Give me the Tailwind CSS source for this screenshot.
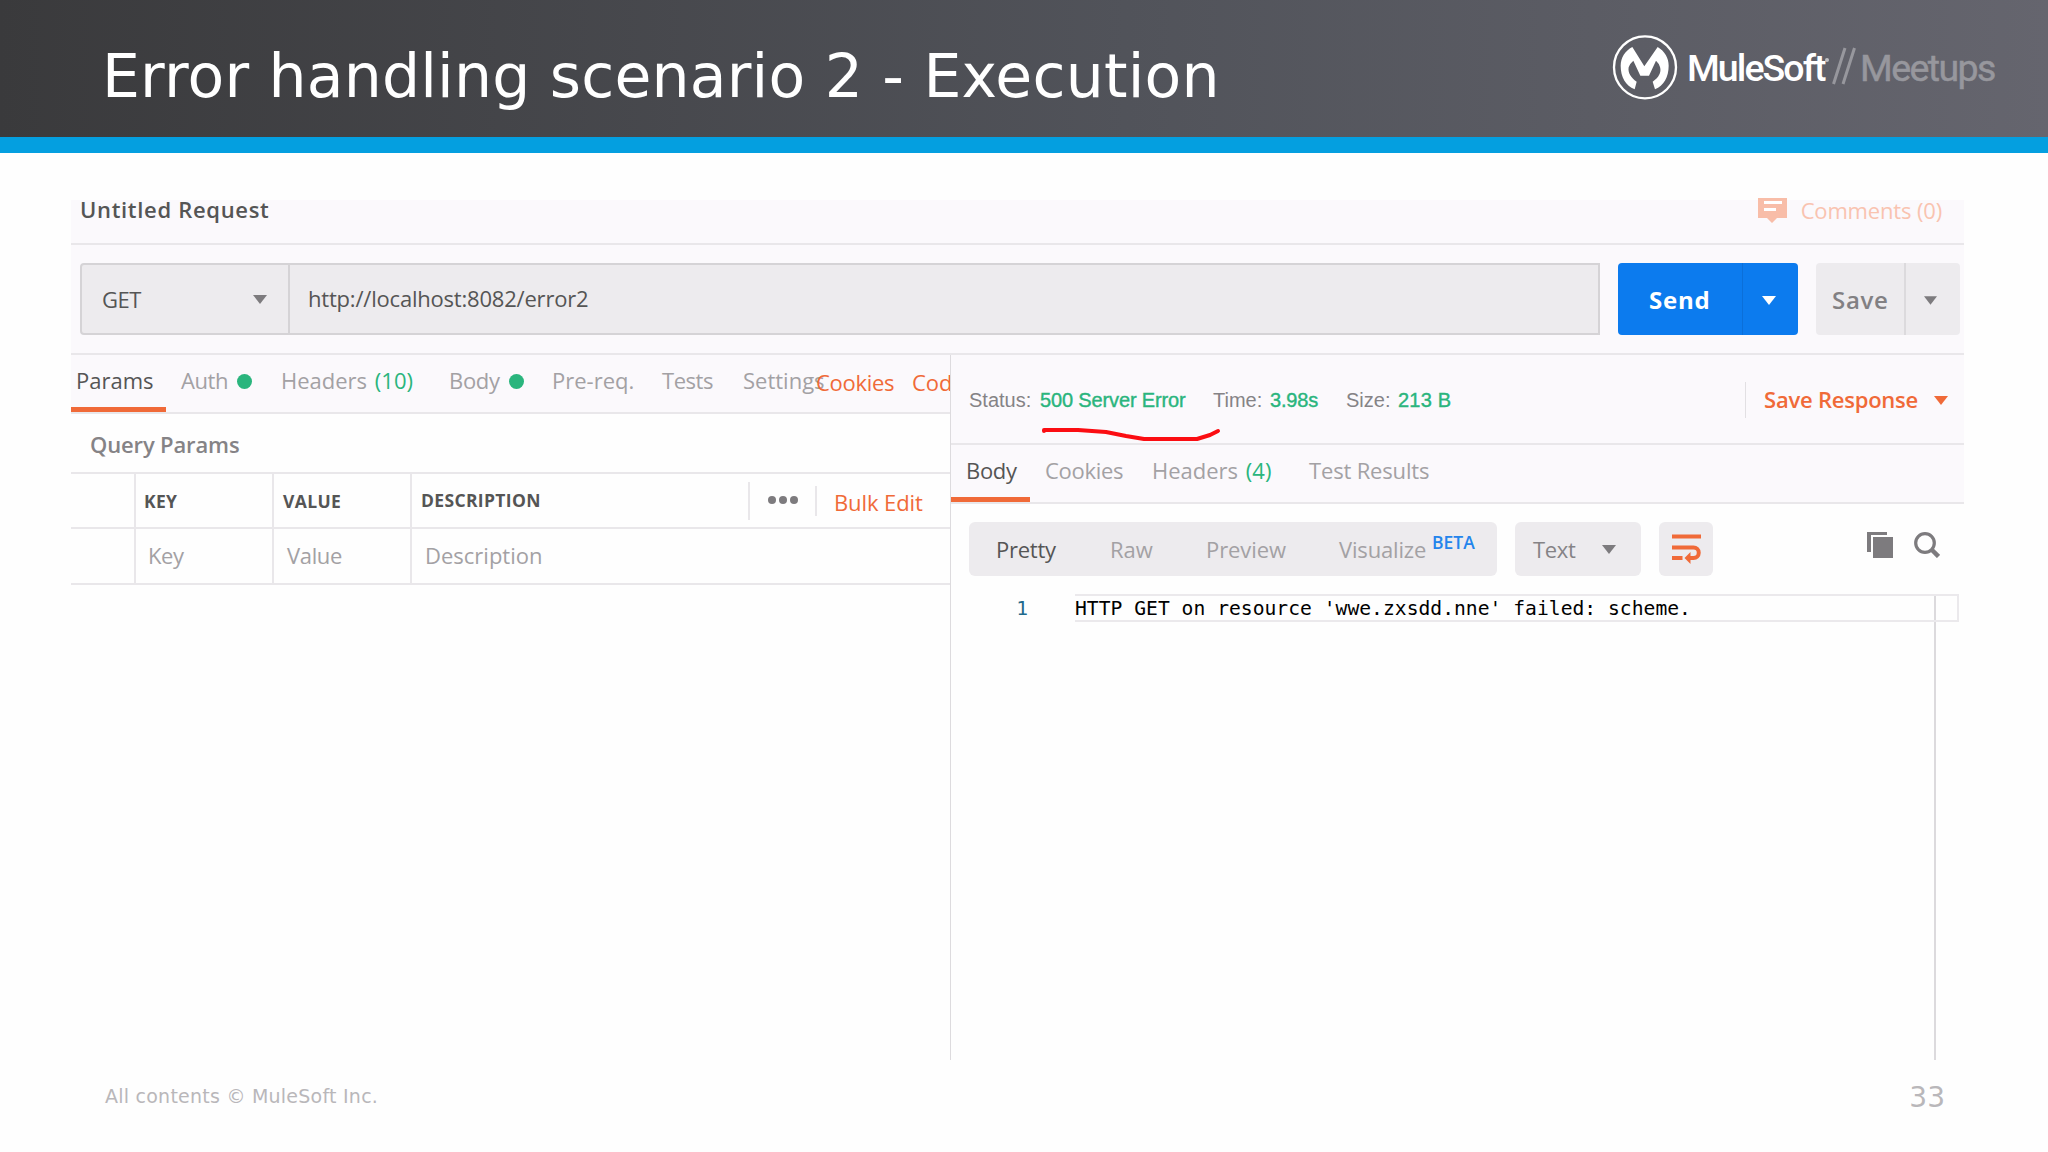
<!DOCTYPE html>
<html lang="en">
<head>
    <meta charset="UTF-8">
    <meta name="viewport" content="width=device-width, initial-scale=1.0">
    <title>Error handling scenario 2 - Execution</title>
    <script src="https://cdn.jsdelivr.net/npm/@tailwindcss/browser@4"></script>
</head>
<body class="w-[2048px] h-[1152px] overflow-hidden flex flex-col bg-[#fefefe] font-['Open_Sans',sans-serif] text-[22px] leading-none whitespace-nowrap">
    <!-- Slide header -->
    <header class="h-[153px] shrink-0 flex justify-between border-b-[16px] border-[#049fe0] bg-linear-to-r from-[#3a3a3c] via-[#51535a] via-55% to-[#65656e] text-white">
        <h1 class="pl-[102px] pt-[46px] font-['DejaVu_Sans',sans-serif] text-[60px] tracking-[0.2px]">Error handling scenario 2 - Execution</h1>
        <div class="w-[436px] h-[134px] flex items-center">
            <svg class="w-[66px] h-[66px] shrink-0" viewBox="21 27 198 198" fill="none">
                <circle cx="120" cy="127" r="93" stroke="#fff" stroke-width="7"/>
                <path d="M82 66L118 124L158 66C179 79 191 98 191 122C191 156 176 182 150 193L143 170C161 158 170 142 165 126Q161 114 153 107L132 152H106L85 107Q75 115 71 127C68 143 78 159 95 170L89 193C62 182 47 156 47 122C47 98 60 78 82 66Z" fill="#fff"/>
            </svg>
            <div class="flex items-center pt-[3px] pl-[9px] font-['Roboto',sans-serif] text-[37.5px]">
                <span class="w-[140px] font-medium tracking-[-1.93px]">MuleSoft</span>
                <span class="w-[4px] h-[4px] -mt-[17px] -ml-[2px] rounded-full bg-white/60"></span>
                <svg class="w-[25px] h-[38px] mr-[3px] ml-[3px] -mt-[5px]" viewBox="0 0 25 38" stroke="#97979d" stroke-width="3">
                    <path d="M1.5 37L13 1M11 37L22.500 1"/>
                </svg>
                <span class="tracking-[-1.58px] text-[#97979d] [-webkit-text-stroke:0.5px]">Meetups</span>
            </div>
        </div>
    </header>

    <!-- Request client -->
    <main class="w-[1893px] h-[860px] shrink-0 mt-[47px] ml-[71px] flex flex-col">
        <div class="h-[45px] shrink-0 flex justify-between border-b-2 border-[#e9e7ea] bg-[#fbf9fc] pl-[9px] pr-[22px] leading-[19px]">
            <span class="font-semibold tracking-[0.68px] text-[#555]">Untitled Request</span>
            <div class="flex text-[#f9c3b0]">
                <svg class="w-[29px] h-[26px] -mt-[3px] mr-[14px]" viewBox="0 0 29 26">
                    <path d="M0 1h29v20h-10l-5 5-5-5H0z" fill="#f8bda8"/>
                    <path d="M6 5.500h18M6 12.500h12" stroke="#fff" stroke-width="3"/>
                </svg>
                <span class="pt-px tracking-[-0.16px]">Comments (0)</span>
            </div>
        </div>

        <div class="h-[110px] shrink-0 flex border-b-2 border-[#e9e7ea] bg-[#fbf9fc] pt-[18px] pl-[9px]">
            <div class="w-[1520px] h-[72px] flex border-2 border-[#d5d3d6] rounded-l-[4px] bg-[#edebee] text-[#555]">
                <div class="w-[208px] flex items-center justify-between border-r-2 border-[#d5d3d6] pl-[20px] pr-[21px]">
                    <span class="tracking-[-0.5px]">GET</span>
                    <svg class="w-[14px] h-[9px]" viewBox="0 0 14 9"><path d="M0 0h14L7 9z" fill="#7d7b7e"/></svg>
                </div>
                <span class="self-center pl-[18px] pb-[3px] tracking-[-0.2px]">http://localhost:8082/error2</span>
            </div>
            <div class="w-[180px] h-[72px] ml-[18px] flex rounded-[4px] bg-[#0c7bee] text-white">
                <span class="w-[125px] pl-[31px] pt-[25px] border-r border-[#0b6fd9] text-2xl leading-none font-bold tracking-[0.8px]">Send</span>
                <svg class="w-[14px] h-[9px] mt-[33px] ml-[19px]" viewBox="0 0 14 9"><path d="M0 0h14L7 9z" fill="#fff"/></svg>
            </div>
            <div class="w-[144px] h-[72px] ml-[18px] flex rounded-[4px] bg-[#edebee] text-[#828083]">
                <span class="w-[90px] pl-[16px] pt-[25px] border-r-2 border-[#dcdadd] text-2xl leading-none font-semibold tracking-[0.7px]">Save</span>
                <svg class="w-[13px] h-[9px] mt-[33px] ml-[18px]" viewBox="0 0 14 9"><path d="M0 0h14L7 9z" fill="#7d7b7e"/></svg>
            </div>
        </div>

        <div class="grow flex">
            <!-- Request side -->
            <section class="w-[879px] overflow-hidden">
                <div class="h-[59px] flex border-b-2 border-[#e9e7ea] bg-[#fbf9fc] text-[#a3a1a4]">
                    <div class="w-[95px] border-b-[5px] border-[#f06a38] pt-[14px] pl-[5px] text-[#555]">Params</div>
                    <div class="w-[115px] flex pt-[14px] pl-[15px]">
                        <span class="w-[56px] tracking-[-0.4px]">Auth</span>
                        <span class="w-[15px] h-[15px] mt-[5px] rounded-full bg-[#2ab57d]"></span>
                    </div>
                    <div class="w-[168px] pt-[14px]">Headers <span class="pl-[2px] text-[#2ab57d]">(10)</span></div>
                    <div class="w-[103px] flex pt-[14px]">
                        <span class="w-[60px] tracking-[-0.3px]">Body</span>
                        <span class="w-[15px] h-[15px] mt-[5px] rounded-full bg-[#2ab57d]"></span>
                    </div>
                    <div class="w-[110px] pt-[14px]">Pre-req.</div>
                    <div class="w-[81px] pt-[14px] tracking-[-0.45px]">Tests</div>
                    <div class="w-[73px] pt-[14px]">Settings</div>
                    <div class="w-[96px] pt-4 tracking-[-0.3px] text-[#f06a38]">Cookies</div>
                    <div class="w-[38px] pt-4 overflow-hidden text-[#f06a38]">Code</div>
                </div>
                <div class="h-[58px] flex items-center pt-px pl-[19px] font-semibold tracking-[-0.14px] text-[#858386]">Query Params</div>
                <div class="grid grid-cols-[65px_138px_138px_538px] border-t-2 border-[#e9e7ea] text-[#a3a1a4]">
                    <div class="h-[55px] border-r-2 border-b-2 border-[#e9e7ea]"></div>
                    <div class="flex items-center border-r-2 border-b-2 border-[#e9e7ea] pt-[2px] pl-[8px] text-[17.5px] font-bold tracking-[0.3px] text-[#555]">KEY</div>
                    <div class="flex items-center border-r-2 border-b-2 border-[#e9e7ea] pt-[2px] pl-[9px] text-[17.5px] font-bold tracking-[0.36px] text-[#555]">VALUE</div>
                    <div class="flex items-center border-b-2 border-[#e9e7ea] pt-px pl-[9px] text-[#f06a38]">
                        <span class="w-[327px] text-[17.5px] font-bold tracking-[0.35px] text-[#555]">DESCRIPTION</span>
                        <div class="w-[67px] h-[38px] flex justify-center gap-[3px] border-l-2 border-[#e9e7ea] pt-[14px]">
                            <span class="w-[8px] h-[8px] rounded-full bg-[#7d7b7e]"></span>
                            <span class="w-[8px] h-[8px] rounded-full bg-[#7d7b7e]"></span>
                            <span class="w-[8px] h-[8px] rounded-full bg-[#7d7b7e]"></span>
                        </div>
                        <span class="h-[30px] border-l-2 border-[#e9e7ea] pt-[5px] pl-[17px] tracking-[-0.1px]">Bulk Edit</span>
                    </div>
                    <div class="h-[56px] border-r-2 border-b-2 border-[#e9e7ea]"></div>
                    <div class="flex items-center border-r-2 border-b-2 border-[#e9e7ea] pb-[3px] pl-[12px] tracking-[-0.4px]">Key</div>
                    <div class="flex items-center border-r-2 border-b-2 border-[#e9e7ea] pb-[3px] pl-[13px] tracking-[-0.35px]">Value</div>
                    <div class="flex items-center border-b-2 border-[#e9e7ea] pb-[3px] pl-[13px]">Description</div>
                </div>
            </section>

            <!-- Response side -->
            <section class="grow flex flex-col border-l border-[#dddbde]">
                <div class="relative h-[90px] shrink-0 flex items-center border-b-2 border-[#e9e7ea] bg-[#fbf9fc] pl-[18px] pt-px font-['Liberation_Sans',sans-serif] text-xl leading-none text-[#858386]">
                    <span class="w-[71px]">Status:</span>
                    <span class="w-[173px] tracking-[-0.14px] text-[#2ab57d] [-webkit-text-stroke:0.4px]">500 Server Error</span>
                    <span class="w-[57px]">Time:</span>
                    <span class="w-[76px] tracking-[-0.2px] text-[#2ab57d] [-webkit-text-stroke:0.4px]">3.98s</span>
                    <span class="w-[52px]">Size:</span>
                    <span class="tracking-[0.2px] text-[#2ab57d] [-webkit-text-stroke:0.4px]">213 B</span>
                    <div class="h-[36px] ml-auto mr-[16px] flex items-center border-l border-[#e2e0e3] pb-px pl-[18px] font-['Open_Sans',sans-serif] text-[22px] font-semibold text-[#f06a38]">
                        <span class="w-[170px] tracking-[-0.22px]">Save Response</span>
                        <svg class="w-[14px] h-[9px] mt-[2px]" viewBox="0 0 14 9"><path d="M0 0h14L7 9z" fill="currentColor"/></svg>
                    </div>
                    <!-- Hand-drawn underline below the status -->
                    <svg class="absolute left-[90px] top-[70px] w-[182px] h-[20px]" viewBox="0 0 182 20" fill="none" stroke="#fb0d12" stroke-width="4" stroke-linecap="round" stroke-linejoin="round">
                        <path d="M3 6V5H37L65 7L85 11L103 14H156L169 10L177 6"/>
                    </svg>
                </div>
                <div class="h-[59px] shrink-0 flex border-b-2 border-[#e9e7ea] bg-[#fbf9fc] text-[#a3a1a4]">
                    <div class="w-[79px] border-b-[5px] border-[#f06a38] pt-[14px] pl-[15px] tracking-[-0.3px] text-[#555]">Body</div>
                    <div class="w-[122px] pt-[14px] pl-[15px] tracking-[-0.3px]">Cookies</div>
                    <div class="w-[157px] pt-[14px]">Headers <span class="pl-[2px] text-[#2ab57d]">(4)</span></div>
                    <div class="pt-[14px] tracking-[-0.17px]">Test Results</div>
                </div>
                <div class="h-[90px] shrink-0 flex pt-[18px] pl-[18px] text-[#a3a1a4]">
                    <div class="w-[528px] h-[54px] flex items-center rounded-[6px] bg-[#edebee] pl-[27px]">
                        <span class="w-[114px] tracking-[-0.25px] text-[#555]">Pretty</span>
                        <span class="w-[96px]">Raw</span>
                        <span class="w-[133px] tracking-[-0.08px]">Preview</span>
                        <span class="w-[93px] tracking-[-0.16px]">Visualize</span>
                        <span class="pb-[13px] text-[17.5px] font-semibold text-[#2484ec]">BETA</span>
                    </div>
                    <div class="w-[126px] h-[54px] ml-[18px] flex items-center rounded-[6px] bg-[#edebee] pl-[18px] text-[#858386]">
                        <span class="w-[69px] tracking-[-0.33px]">Text</span>
                        <svg class="w-[14px] h-[9px]" viewBox="0 0 14 9"><path d="M0 0h14L7 9z" fill="#7d7b7e"/></svg>
                    </div>
                    <div class="w-[54px] h-[54px] ml-[18px] flex justify-center rounded-[6px] bg-[#edebee] pt-[11px]">
                        <svg class="w-[29px] h-[32px]" viewBox="0 0 29 32" fill="none" stroke="#f06a38" stroke-width="4">
                            <path d="M0 3.500h29M0 14.500h21.500a5 5 0 0 1 0 10.500H17M0 25h10.500"/>
                            <path d="M12.500 25l6-6v12z" fill="#f06a38" stroke="none"/>
                        </svg>
                    </div>
                    <div class="ml-auto mr-[24px] pt-[10px] flex gap-[21px]">
                        <svg class="w-[26px] h-[26px]" viewBox="0 0 26 26" fill="#7d7b7e">
                            <path d="M0 0h20v3H4v17H0z"/>
                            <path d="M6 5h20v21H6z"/>
                        </svg>
                        <svg class="w-[26px] h-[26px]" viewBox="0 0 26 26" fill="none" stroke="#7d7b7e">
                            <circle cx="11" cy="11" r="9.300" stroke-width="3.200"/>
                            <path d="M17.500 17.500L24.500 24.500" stroke-width="4.500"/>
                        </svg>
                    </div>
                </div>
                <div class="grow flex font-['DejaVu_Sans_Mono',monospace] text-[19.65px] text-black">
                    <div class="w-[124px] pt-[5px] pr-[47px] text-right text-[#1f6a8c]">1</div>
                    <div class="relative w-[861px] border-r-2 border-[#dcdadd]">
                        <div class="w-[884px] h-[28px] border-2 border-[#ebe9ec] border-l-0 pt-[3px] tracking-[0.02px]">HTTP GET on resource 'wwe.zxsdd.nne' failed: scheme.</div>
                    </div>
                </div>
            </section>
        </div>
    </main>

    <footer class="h-[74px] flex items-center justify-between pl-[105px] pr-[103px] font-['DejaVu_Sans',sans-serif] text-[#b9b7ba]">
        <span class="pb-px text-[19px] tracking-[0.24px]">All contents © MuleSoft Inc.</span>
        <span class="pt-[2px] text-[28px]">33</span>
    </footer>
</body>
</html>
